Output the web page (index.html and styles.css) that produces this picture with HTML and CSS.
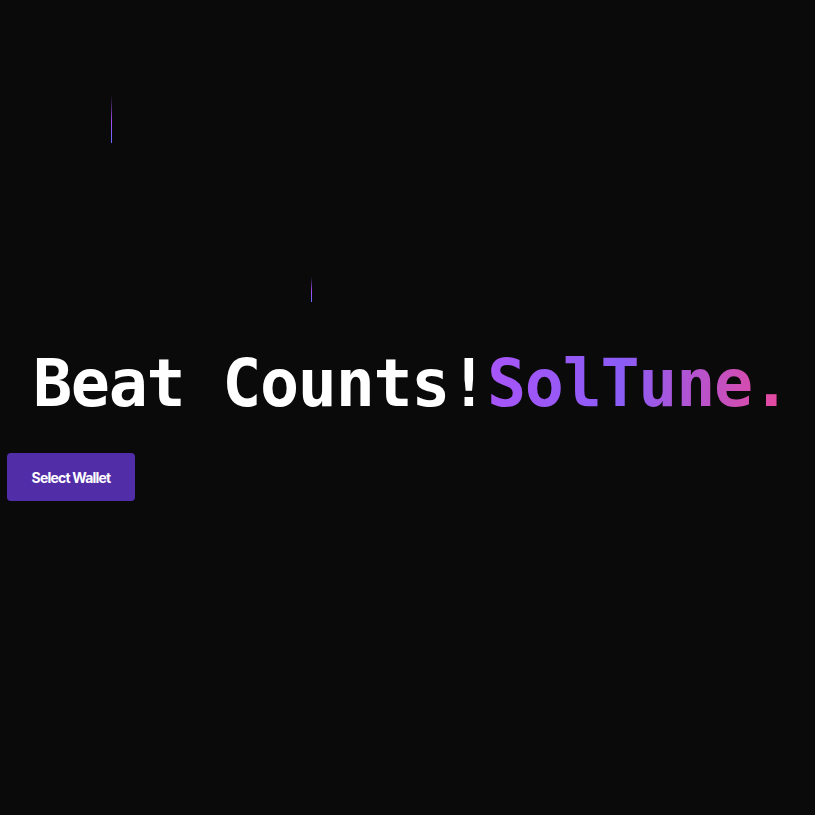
FILE: index.html
```html
<!DOCTYPE html>
<html lang="en">
<head>
<meta charset="utf-8">
<title>SolTune</title>
<link rel="stylesheet" href="styles.css">
</head>
<body>
<main class="page">
  <div class="stage">
    <span class="beat beat-a"></span>
    <span class="beat beat-b"></span>
  </div>
  <h1 class="title">Beat Counts!<span class="brand">SolTune.</span></h1>
  <div class="actions">
    <button class="wallet-btn" type="button">Select Wallet</button>
  </div>
</main>
</body>
</html>
```
FILE: styles.css
```css
html, body {
  margin: 0;
  padding: 0;
  background: #0a0a0a;
  height: 100%;
}
.page {
  padding: 8px 0 0 7px;
}
.stage {
  position: relative;
  height: 339px;
}
.beat {
  position: absolute;
  width: 1px;
  background: linear-gradient(to bottom, rgba(153, 69, 255, 0) 0%, #a24df0 55%, #6a6cff 100%);
}
.beat-a {
  left: 104px;
  top: 87px;
  height: 48px;
}
.beat-b {
  left: 304px;
  top: 269px;
  height: 25px;
}
.title {
  margin: 0;
  padding-left: 26px;
  font-family: "DejaVu Sans Mono", monospace;
  font-weight: 700;
  font-size: 65px;
  letter-spacing: -1.3px;
  line-height: 74px;
  color: #ffffff;
  white-space: nowrap;
}
.brand {
  background: linear-gradient(to right, #a855f7 0%, #8b5cf6 45%, #ec4899 100%);
  -webkit-background-clip: text;
  background-clip: text;
  color: transparent;
}
.actions {
  margin-top: 32px;
}
.wallet-btn {
  width: 128px;
  height: 48px;
  border: none;
  border-radius: 4px;
  background: #512da8;
  color: #ffffff;
  font-family: Inter, "Noto Sans", sans-serif;
  font-weight: 700;
  font-size: 14px;
  letter-spacing: -0.8px;
  padding: 0;
  cursor: pointer;
}
```
